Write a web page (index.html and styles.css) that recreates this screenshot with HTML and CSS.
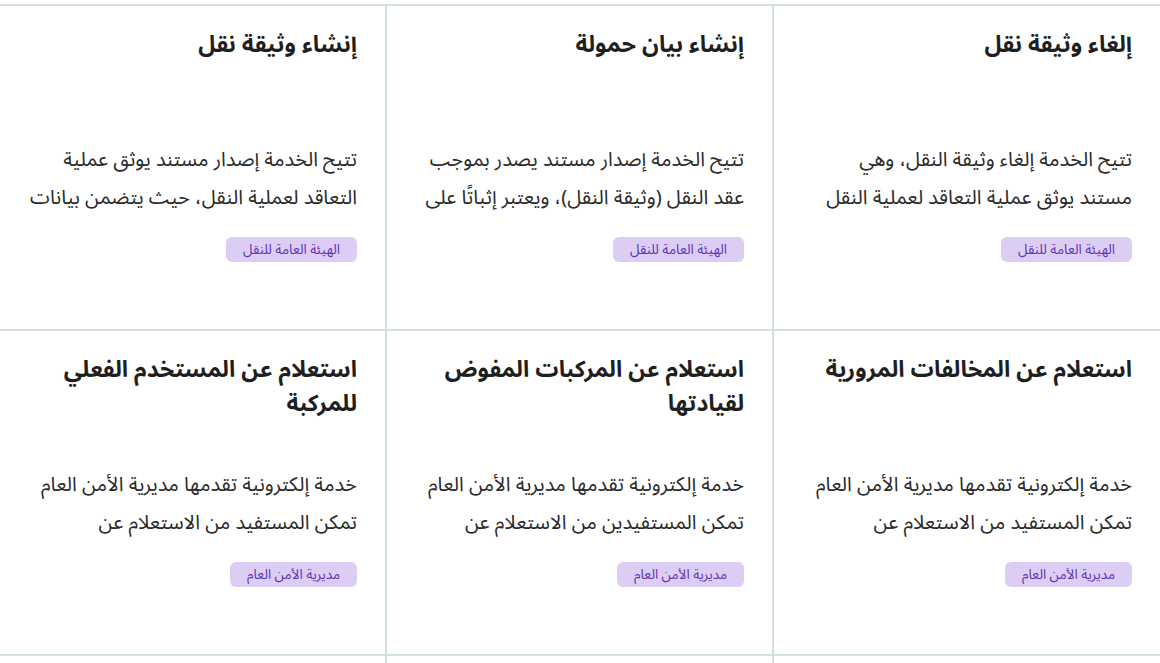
FILE: index.html
```html
<!DOCTYPE html>
<html lang="ar" dir="rtl">
<head>
<meta charset="utf-8">
<title>الخدمات</title>
<link rel="stylesheet" href="styles.css">
</head>
<body>
<div class="grid">
  <div class="card">
    <h3 class="title">إلغاء وثيقة نقل</h3>
    <p class="desc">تتيح الخدمة إلغاء وثيقة النقل، وهي مستند يوثق عملية التعاقد لعملية النقل</p>
    <span class="tag">الهيئة العامة للنقل</span>
  </div>
  <div class="card">
    <h3 class="title">إنشاء بيان حمولة</h3>
    <p class="desc">تتيح الخدمة إصدار مستند يصدر بموجب عقد النقل (وثيقة النقل)، ويعتبر إثباتًا على</p>
    <span class="tag">الهيئة العامة للنقل</span>
  </div>
  <div class="card">
    <h3 class="title">إنشاء وثيقة نقل</h3>
    <p class="desc">تتيح الخدمة إصدار مستند يوثق عملية التعاقد لعملية النقل، حيث يتضمن بيانات</p>
    <span class="tag">الهيئة العامة للنقل</span>
  </div>
  <div class="card">
    <h3 class="title">استعلام عن المخالفات المرورية</h3>
    <p class="desc">خدمة إلكترونية تقدمها مديرية الأمن العام تمكن المستفيد من الاستعلام عن</p>
    <span class="tag">مديرية الأمن العام</span>
  </div>
  <div class="card">
    <h3 class="title">استعلام عن المركبات المفوض لقيادتها</h3>
    <p class="desc">خدمة إلكترونية تقدمها مديرية الأمن العام تمكن المستفيدين من الاستعلام عن</p>
    <span class="tag">مديرية الأمن العام</span>
  </div>
  <div class="card">
    <h3 class="title">استعلام عن المستخدم الفعلي للمركبة</h3>
    <p class="desc">خدمة إلكترونية تقدمها مديرية الأمن العام تمكن المستفيد من الاستعلام عن</p>
    <span class="tag">مديرية الأمن العام</span>
  </div>
  <div class="card card-empty"></div>
  <div class="card card-empty"></div>
  <div class="card card-empty"></div>
</div>
</body>
</html>
```
FILE: styles.css
```css
html, body {
  margin: 0;
  padding: 0;
  background: #ffffff;
}
body {
  font-family: "Noto Sans Arabic", "Noto Sans", sans-serif;
  color: #222222;
  overflow: hidden;
}
.grid {
  margin-top: 4px;
  padding-top: 2px;
  display: grid;
  grid-template-columns: 1fr 385px 385px;
  grid-auto-rows: 323px;
  gap: 2px;
  background: #d0e1df;
}
.card {
  background: #ffffff;
  padding: 22px 28px 0 28px;
  display: flex;
  flex-direction: column;
  align-items: flex-start;
}
.title {
  margin: 0 0 45px 0;
  min-height: 68px;
  font-size: 23px;
  line-height: 34px;
  font-weight: 700;
  color: #1f1f1f;
}
.desc {
  margin: 0 0 20px 0;
  font-size: 20px;
  line-height: 38px;
  color: #2a2a2a;
}
.tag {
  display: inline-block;
  background: #dccdf4;
  color: #5e32b8;
  font-size: 13.5px;
  line-height: 25px;
  height: 25px;
  padding: 0 17px;
  border-radius: 6px;
}
```
